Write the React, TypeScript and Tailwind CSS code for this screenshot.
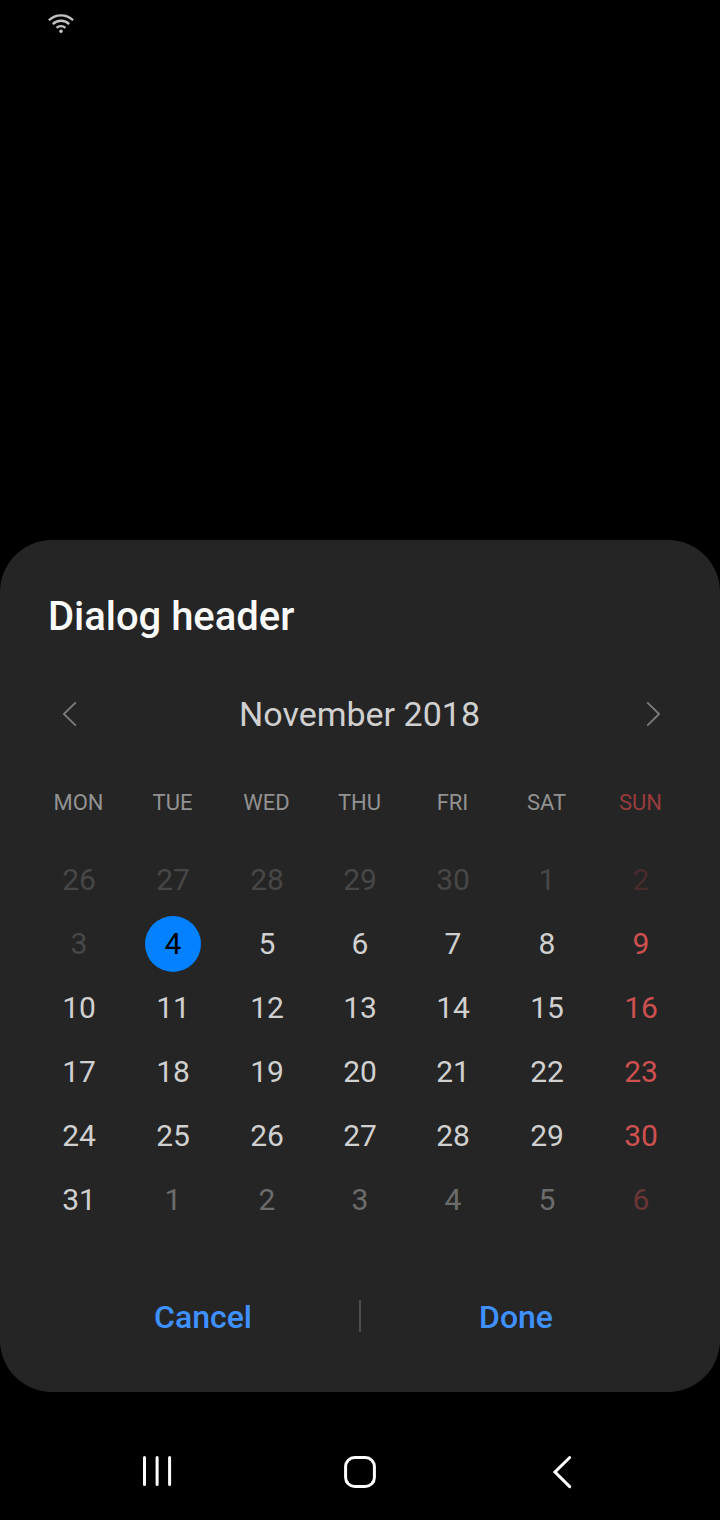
type Tone = "normal" | "faint" | "dim" | "selected";

interface Day {
  label: number;
  tone: Tone;
}

const WEEKDAYS = ["MON", "TUE", "WED", "THU", "FRI", "SAT", "SUN"];

const range = (from: number, to: number, tone: Tone): Day[] =>
  Array.from({ length: to - from + 1 }, (_, i) => ({ label: from + i, tone }));

const DAYS: Day[] = [
  ...range(26, 30, "faint"),
  ...range(1, 3, "faint"),
  ...range(4, 4, "selected"),
  ...range(5, 31, "normal"),
  ...range(1, 6, "dim"),
];

const WEEKDAY_TONES: Record<Tone, string> = {
  normal: "text-[#d0d0d0]",
  faint: "text-[#474747]",
  dim: "text-[#6c6c6c]",
  selected: "bg-[#0381fe] text-black",
};

const SUNDAY_TONES: Record<Tone, string> = {
  normal: "text-[#ce5051]",
  faint: "text-[#482c2d]",
  dim: "text-[#6b3536]",
  selected: "bg-[#0381fe] text-black",
};

function StatusBar() {
  return (
    <header className="flex h-12 items-start pl-[47px] pt-[13px]">
      <svg width="28" height="21" viewBox="0 0 28 21" fill="none" stroke="#c4c4c4" strokeWidth="2.3">
        <path d="M1.9 7.3C8.4 0.6 19.6 0.6 26.1 7.3" />
        <path d="M5.8 11.1C10.3 6.6 17.7 6.6 22.2 11.1" />
        <path d="M9.6 14.8C12 12.5 16 12.5 18.4 14.8" />
        <circle cx="14" cy="18.3" r="1.8" fill="#c4c4c4" stroke="none" />
      </svg>
    </header>
  );
}

function Chevron({ d }: { d: string }) {
  return (
    <svg width="16" height="28" viewBox="0 0 16 28" fill="none" stroke="#7b7b7b" strokeWidth="1.8" strokeLinejoin="round">
      <path d={d} />
    </svg>
  );
}

function MonthHeader() {
  return (
    <div className="mt-[53px] flex h-10 items-center pl-[62px] pr-[58px]">
      <button aria-label="Previous month">
        <Chevron d="M13.8 2.3L1.9 14L13.8 25.7" />
      </button>
      <span className="flex-1 pr-[5px] text-center text-[34px] leading-10 text-[#d0d0d0]">November 2018</span>
      <button aria-label="Next month">
        <Chevron d="M1.2 2.3L13.1 14L1.2 25.7" />
      </button>
    </div>
  );
}

function Calendar() {
  return (
    <div className="px-8">
      <div className="mt-[55px] grid h-7 grid-cols-[94px_94px_94px_92px_94px_94px_94px] text-center text-[22px] leading-7 text-[#929292]">
        {WEEKDAYS.map((day) => (
          <span key={day} className={day === "SUN" ? "pr-px text-[#983b3b]" : "pr-px"}>
            {day}
          </span>
        ))}
      </div>
      <div className="mt-[31px] grid auto-rows-[64px] grid-cols-[94px_94px_94px_92px_94px_94px_94px] place-items-center">
        {DAYS.map((day, i) => (
          <button
            key={i}
            className={`flex size-14 items-center justify-center rounded-full text-[30px] leading-9 ${
              i % 7 === 6 ? SUNDAY_TONES[day.tone] : WEEKDAY_TONES[day.tone]
            }`}
          >
            {day.label}
          </button>
        ))}
      </div>
    </div>
  );
}

function NavigationBar() {
  return (
    <nav className="mt-[60px] flex h-10 items-center justify-between pl-[137px] pr-[138px]">
      <svg width="40" height="40" viewBox="0 0 40 40" stroke="#fff" strokeWidth="3" strokeLinecap="round">
        <path d="M7.5 5.5V32.5M20.1 5.5V32.5M32.6 5.5V32.5" />
      </svg>
      <svg width="40" height="40" viewBox="0 0 40 40" fill="none" stroke="#fff" strokeWidth="3">
        <rect x="5.6" y="5.6" width="28.8" height="28.8" rx="9" />
      </svg>
      <svg width="40" height="40" viewBox="0 0 40 40" fill="none" stroke="#fff" strokeWidth="3" strokeLinecap="round">
        <path d="M27.7 5.5L13 20L27.7 34.6" />
      </svg>
    </nav>
  );
}

export default function App() {
  return (
    <div className="flex h-[1520px] w-[720px] flex-col overflow-hidden bg-black font-['Roboto',sans-serif]">
      <StatusBar />
      <main role="dialog" className="mt-[492px] h-[852px] rounded-[52px] bg-[#252525]">
        <h1 className="px-12 pt-[53px] text-[40px] font-medium leading-[48px] tracking-[-0.03px] text-[#fafafa]">Dialog header</h1>
        <MonthHeader />
        <Calendar />
        <footer className="mt-[52px] flex h-16 items-center px-12 text-[32px] font-medium text-[#3e91ff]">
          <button className="flex-1 pr-px pt-[2px]">Cancel</button>
          <span className="h-8 w-[2px] bg-[#4d4d4d]" />
          <button className="flex-1 pr-px pt-[2px]">Done</button>
        </footer>
      </main>
      <NavigationBar />
    </div>
  );
}
